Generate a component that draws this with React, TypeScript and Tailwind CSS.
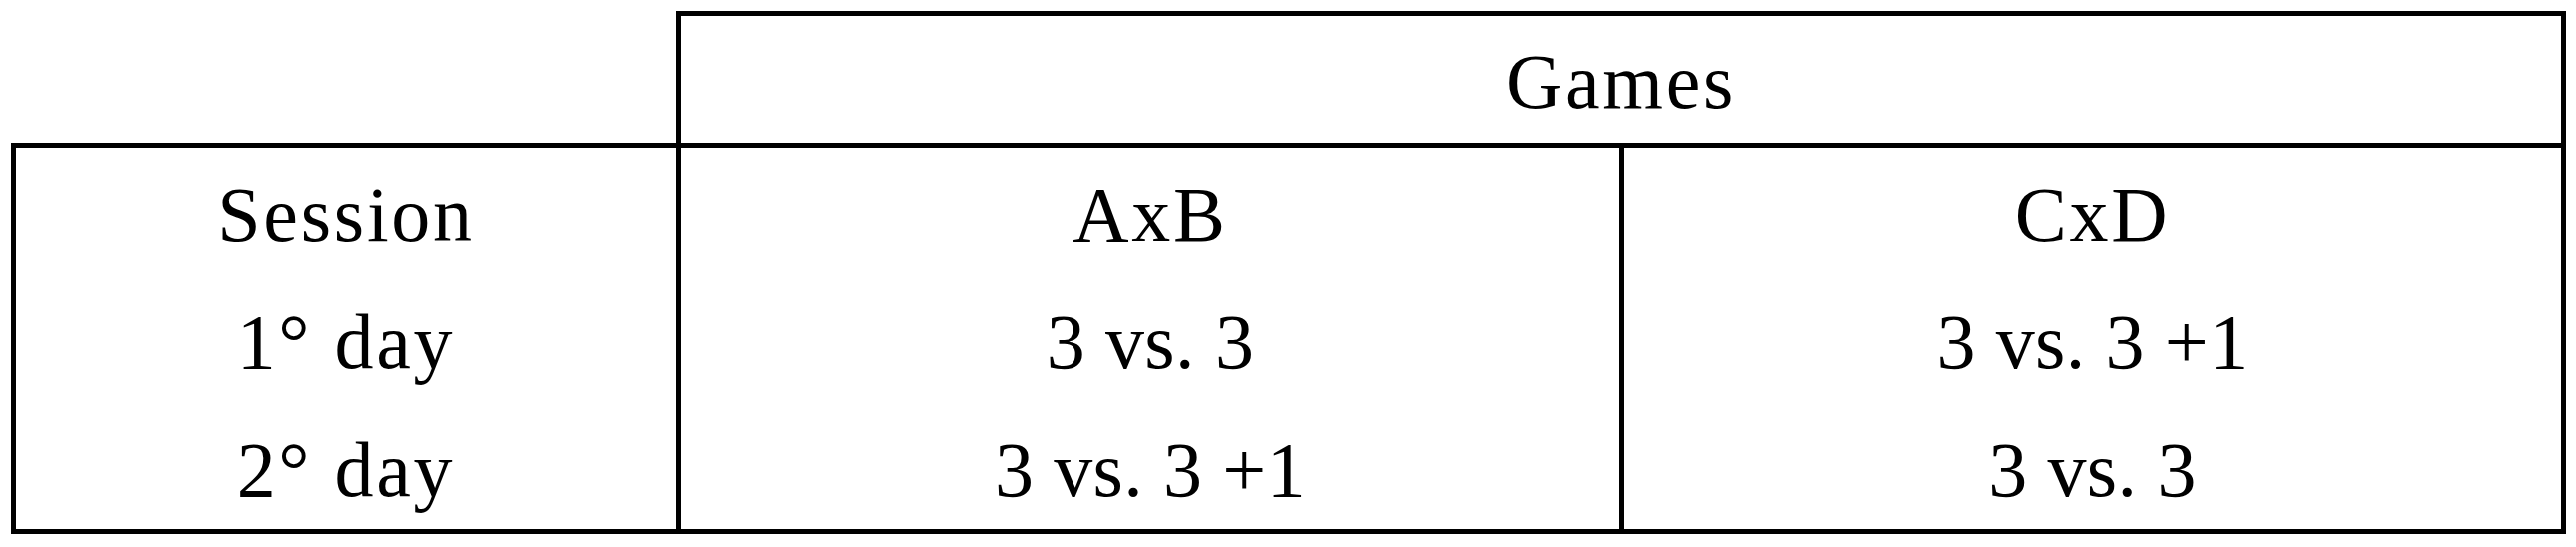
import React from 'react';

const rows = [
  ['Session', 'AxB', 'CxD'],
  ['1° day', '3 vs. 3', '3 vs. 3 +1'],
  ['2° day', '3 vs. 3 +1', '3 vs. 3'],
];

// Liberation Serif runs a bit narrower than the original Palatino on letters,
// digits are close enough, so only word cells get extra tracking
const Cell: React.FC<{ text: string }> = ({ text }) => (
  <div className={text.includes('vs.') ? 'tracking-[0.005em]' : 'tracking-[0.035em]'}>{text}</div>
);

const App: React.FC = () => {
  const column = (i: number) => rows.map((r) => r[i]);

  return (
    <div className="min-h-screen bg-white pt-[11px] pl-[11px] text-black font-['Liberation_Serif',serif] text-[78px]">
      <div className="w-[2561px]">
        <div className="flex">
          <div className="w-[667px]" />
          <div className="w-[1894px] h-[132px] border-t-[5px] border-x-[5px] border-black pt-[4px] text-center leading-[123px] tracking-[0.035em]">
            Games
          </div>
        </div>
        <div className="flex h-[392px] border-[5px] border-black">
          <div className="w-[662px] pt-[3px] text-center leading-[128px]">
            {column(0).map((t) => (
              <Cell key={t} text={t} />
            ))}
          </div>
          <div className="w-[945px] border-l-[5px] border-black pt-[3px] text-center leading-[128px]">
            {column(1).map((t) => (
              <Cell key={t} text={t} />
            ))}
          </div>
          <div className="w-[944px] border-l-[5px] border-black pt-[3px] text-center leading-[128px]">
            {column(2).map((t) => (
              <Cell key={t} text={t} />
            ))}
          </div>
        </div>
      </div>
    </div>
  );
};

export default App;
